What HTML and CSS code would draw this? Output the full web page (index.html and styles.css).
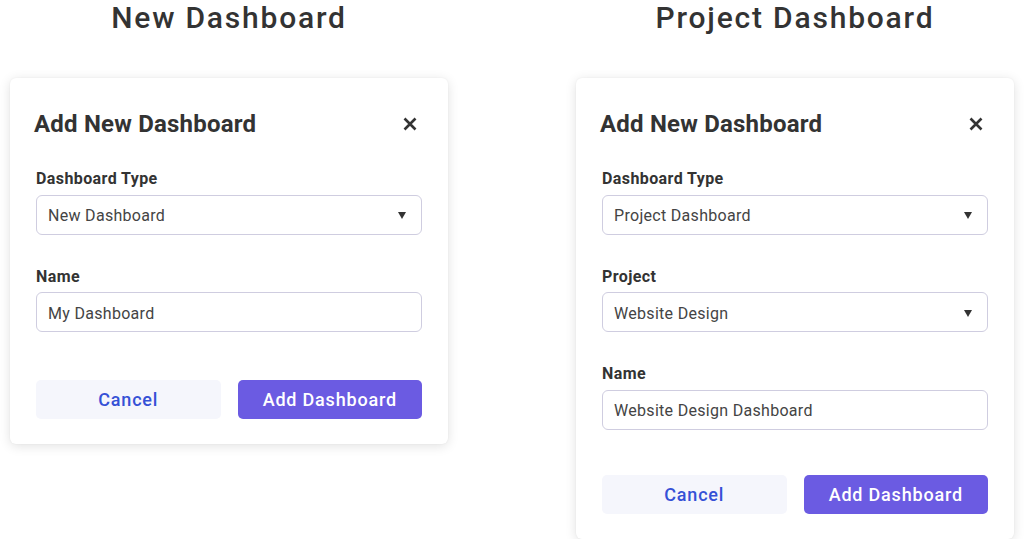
FILE: index.html
```html
<!DOCTYPE html>
<html>
<head>
<meta charset="utf-8">
<link rel="stylesheet" href="styles.css">
</head>
<body>
<div class="page">
  <section class="column">
    <h1 class="heading">New Dashboard</h1>
    <div class="card">
      <div class="card-header">
        <h2 class="card-title">Add New Dashboard</h2>
        <button class="close" aria-label="Close">
          <svg width="14" height="14" viewBox="0 0 14 14"><path d="M1.5 1.5L12.5 12.5M12.5 1.5L1.5 12.5" stroke="#333" stroke-width="2.6" stroke-linecap="butt"/></svg>
        </button>
      </div>
      <div class="group first">
        <div class="label">Dashboard Type</div>
        <div class="field select"><span>New Dashboard</span><span class="caret"></span></div>
      </div>
      <div class="group">
        <div class="label">Name</div>
        <div class="field"><span>My Dashboard</span></div>
      </div>
      <div class="actions">
        <button class="btn cancel">Cancel</button>
        <button class="btn primary">Add Dashboard</button>
      </div>
    </div>
  </section>
  <section class="column">
    <h1 class="heading">Project Dashboard</h1>
    <div class="card">
      <div class="card-header">
        <h2 class="card-title">Add New Dashboard</h2>
        <button class="close" aria-label="Close">
          <svg width="14" height="14" viewBox="0 0 14 14"><path d="M1.5 1.5L12.5 12.5M12.5 1.5L1.5 12.5" stroke="#333" stroke-width="2.6" stroke-linecap="butt"/></svg>
        </button>
      </div>
      <div class="group first">
        <div class="label">Dashboard Type</div>
        <div class="field select"><span>Project Dashboard</span><span class="caret"></span></div>
      </div>
      <div class="group">
        <div class="label">Project</div>
        <div class="field select"><span>Website Design</span><span class="caret"></span></div>
      </div>
      <div class="group">
        <div class="label">Name</div>
        <div class="field"><span>Website Design Dashboard</span></div>
      </div>
      <div class="actions tight">
        <button class="btn cancel">Cancel</button>
        <button class="btn primary">Add Dashboard</button>
      </div>
    </div>
  </section>
</div>
</body>
</html>
```
FILE: styles.css
```css
* { box-sizing: border-box; }
html, body { margin: 0; padding: 0; background: #fff; }
body { font-family: Roboto, "Liberation Sans", Arial, sans-serif; color: #333; }
.page {
  display: flex;
  gap: 128px;
  padding-left: 10px;
  align-items: flex-start;
}
.column { width: 438px; display: flex; flex-direction: column; }
.heading {
  margin: 0 0 42px;
  font-size: 30px;
  line-height: 36px;
  font-weight: 500;
  letter-spacing: 1.8px;
  text-align: center;
  color: #333;
}
.card {
  background: #fff;
  border-radius: 6px;
  box-shadow: 0 2px 12px rgba(0,0,0,0.12), 0 0 2px rgba(0,0,0,0.06);
  padding: 31px 26px 25px;
}
.card-header {
  display: flex;
  align-items: center;
  justify-content: space-between;
  height: 30px;
}
.card-title {
  margin: 0 0 0 -2px;
  font-size: 24px;
  line-height: 30px;
  font-weight: 700;
  letter-spacing: 0.2px;
  color: #333;
}
.close {
  width: 24px; height: 24px;
  padding: 0; border: 0; background: none;
  display: flex; align-items: center; justify-content: center;
}
.group { margin-top: 32px; }
.group.first { margin-top: 30px; }
.label {
  font-size: 16px;
  line-height: 20px;
  font-weight: 700;
  letter-spacing: 0.4px;
  color: #333;
  margin-bottom: 5.5px;
}
.field {
  height: 40px;
  border: 1.5px solid #cfcde0;
  border-radius: 6px;
  padding: 2px 12px 0 11px;
  display: flex;
  align-items: center;
  justify-content: space-between;
  font-size: 16px;
  letter-spacing: 0.3px;
  color: #444;
}
.caret {
  width: 0; height: 0;
  border-left: 4.5px solid transparent;
  border-right: 4.5px solid transparent;
  border-top: 7px solid #333;
  margin-right: 3px;
}
.actions {
  margin-top: 48px;
  display: grid;
  grid-template-columns: 1fr 1fr;
  gap: 17px;
}
.actions.tight { margin-top: 45px; }
.btn {
  height: 39px;
  border: 0;
  border-radius: 5px;
  font-family: Roboto, "Liberation Sans", Arial, sans-serif;
  font-size: 18px;
  font-weight: 500;
  letter-spacing: 0.8px;
}
.cancel { background: #f5f6fc; color: #3551d6; }
.primary { background: #6b5be2; color: #fff; }
```
